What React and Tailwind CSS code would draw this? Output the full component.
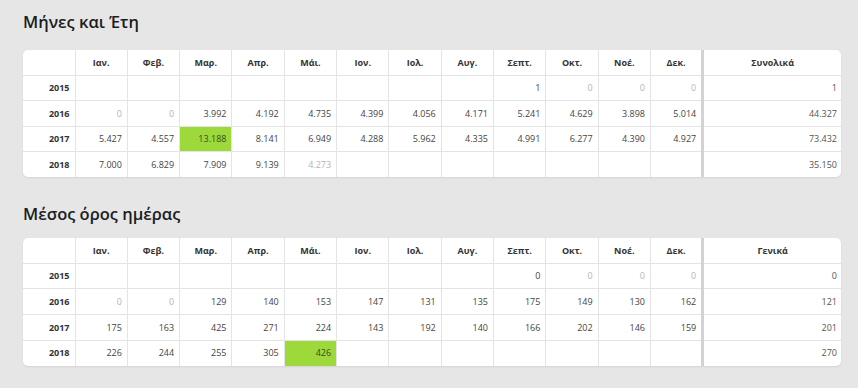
import React from 'react';

const months = ['Ιαν.', 'Φεβ.', 'Μαρ.', 'Απρ.', 'Μάι.', 'Ιον.', 'Ιολ.', 'Αυγ.', 'Σεπτ.', 'Οκτ.', 'Νοέ.', 'Δεκ.'];

// '~' = faded value, '*' = highlighted (max) cell
const totals = [
    { year: '2015', cells: ['', '', '', '', '', '', '', '', '1', '~0', '~0', '~0'], total: '1' },
    { year: '2016', cells: ['~0', '~0', '3.992', '4.192', '4.735', '4.399', '4.056', '4.171', '5.241', '4.629', '3.898', '5.014'], total: '44.327' },
    { year: '2017', cells: ['5.427', '4.557', '*13.188', '8.141', '6.949', '4.288', '5.962', '4.335', '4.991', '6.277', '4.390', '4.927'], total: '73.432' },
    { year: '2018', cells: ['7.000', '6.829', '7.909', '9.139', '~4.273', '', '', '', '', '', '', ''], total: '35.150' },
];

const averages = [
    { year: '2015', cells: ['', '', '', '', '', '', '', '', '0', '~0', '~0', '~0'], total: '0' },
    { year: '2016', cells: ['~0', '~0', '129', '140', '153', '147', '131', '135', '175', '149', '130', '162'], total: '121' },
    { year: '2017', cells: ['175', '163', '425', '271', '224', '143', '192', '140', '166', '202', '146', '159'], total: '201' },
    { year: '2018', cells: ['226', '244', '255', '305', '*426', '', '', '', '', '', '', ''], total: '270' },
];

function Cell({ value, last }) {
    let text = value;
    let cls = 'text-[#444]';
    if (value.startsWith('~')) {
        text = value.slice(1);
        cls = 'text-[#b4b4b4]';
    } else if (value.startsWith('*')) {
        text = value.slice(1);
        cls = 'bg-[#9dd93a] text-[#3d4a1c]';
    }
    return (
        <td className={`h-[25.6px] text-right pr-[5px] border-r border-[#e4e4e4] ${last ? '' : 'border-b'} ${cls}`}>
            {text}
        </td>
    );
}

function YearTable({ label, rows }) {
    return (
        <div className="w-[818px] bg-white rounded-[5px] overflow-hidden shadow-[0_1px_2px_rgba(0,0,0,0.08)]">
            <table className="w-[818px] table-fixed border-collapse text-[9px]">
                <colgroup>
                    <col className="w-[52px]" />
                    {months.map((m) => (
                        <col key={m} className="w-[52.3px]" />
                    ))}
                    <col className="w-[138px]" />
                </colgroup>
                <thead>
                    <tr className="h-[25px]">
                        <th className="border-r border-b border-[#e4e4e4]"></th>
                        {months.map((m) => (
                            <th key={m} className="border-r border-b border-[#e4e4e4] font-bold text-[#333] text-center">
                                {m}
                            </th>
                        ))}
                        <th className="border-b border-l-[3px] border-[#e4e4e4] border-l-[#d3d3d3] font-bold text-[#333] text-center">
                            {label}
                        </th>
                    </tr>
                </thead>
                <tbody>
                    {rows.map((r, i) => {
                        const last = i === rows.length - 1;
                        return (
                            <tr key={r.year}>
                                <td className={`h-[25.6px] text-right pr-[5px] font-bold text-[#333] border-r border-[#e4e4e4] ${last ? '' : 'border-b'}`}>
                                    {r.year}
                                </td>
                                {r.cells.map((c, j) => (
                                    <Cell key={j} value={c} last={last} />
                                ))}
                                <td className={`h-[25.6px] text-right pr-[4px] text-[#555] border-l-[3px] border-[#e4e4e4] border-l-[#d3d3d3] ${last ? '' : 'border-b'}`}>
                                    {r.total}
                                </td>
                            </tr>
                        );
                    })}
                </tbody>
            </table>
        </div>
    );
}

export default function App() {
    return (
        <div className="w-[858px] h-[388px] bg-[#e6e6e6] pl-[23px] pt-[10px] overflow-hidden font-['Open_Sans',sans-serif]">
            <h2 className="text-[16.5px] leading-6 font-semibold text-[#1c1c1c]">Μήνες και Έτη</h2>
            <div className="mt-[16px]">
                <YearTable label="Συνολικά" rows={totals} />
            </div>
            <h2 className="mt-[25px] text-[16.5px] leading-6 font-semibold text-[#1c1c1c]">Μέσος όρος ημέρας</h2>
            <div className="mt-[12px]">
                <YearTable label="Γενικά" rows={averages} />
            </div>
        </div>
    );
}
